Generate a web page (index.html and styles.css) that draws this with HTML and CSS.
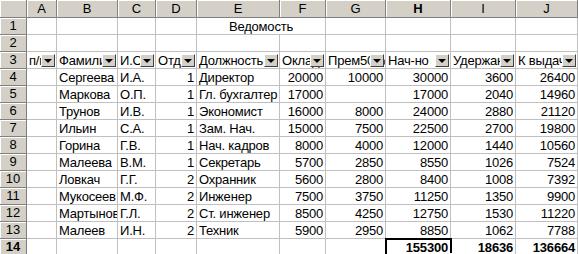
FILE: index.html
```html
<!DOCTYPE html>
<html lang="ru">
<head>
    <meta charset="UTF-8">
    <title>Ведомость</title>
    <link rel="stylesheet" href="styles.css">
</head>
<body>
    <div class="sheet">
        <!-- column headers -->
        <div class="hd corner"></div>
        <div class="hd">A</div>
        <div class="hd">B</div>
        <div class="hd">C</div>
        <div class="hd">D</div>
        <div class="hd">E</div>
        <div class="hd">F</div>
        <div class="hd">G</div>
        <div class="hd cur">H</div>
        <div class="hd">I</div>
        <div class="hd">J</div>

        <!-- 1 -->
        <div class="rh">1</div>
        <div class="c"></div><div class="c"></div><div class="c"></div><div class="c"></div>
        <div class="c title">Ведомость</div>
        <div class="c"></div><div class="c"></div><div class="c"></div><div class="c"></div>

        <!-- 2 -->
        <div class="rh">2</div>
        <div class="c"></div><div class="c"></div><div class="c"></div><div class="c"></div><div class="c"></div>
        <div class="c"></div><div class="c"></div><div class="c"></div><div class="c"></div><div class="c"></div>

        <!-- 3: autofilter headers -->
        <div class="rh">3</div>
        <div class="c flt">п/п<span class="drop"></span></div>
        <div class="c flt">Фамилия<span class="drop"></span></div>
        <div class="c flt">И.О.<span class="drop"></span></div>
        <div class="c flt">Отдел<span class="drop"></span></div>
        <div class="c flt">Должность<span class="drop"></span></div>
        <div class="c flt">Оклад<span class="drop"></span></div>
        <div class="c flt">Прем50%<span class="drop"></span></div>
        <div class="c flt">Нач-но<span class="drop"></span></div>
        <div class="c flt">Удержано<span class="drop"></span></div>
        <div class="c flt">К выдаче<span class="drop"></span></div>

        <!-- 4 -->
        <div class="rh">4</div>
        <div class="c"></div><div class="c">Сергеева</div><div class="c">И.А.</div><div class="c n">1</div>
        <div class="c">Директор</div><div class="c n">20000</div><div class="c n">10000</div>
        <div class="c n">30000</div><div class="c n">3600</div><div class="c n">26400</div>

        <!-- 5 -->
        <div class="rh">5</div>
        <div class="c"></div><div class="c">Маркова</div><div class="c">О.П.</div><div class="c n">1</div>
        <div class="c">Гл. бухгалтер</div><div class="c n">17000</div><div class="c n"></div>
        <div class="c n">17000</div><div class="c n">2040</div><div class="c n">14960</div>

        <!-- 6 -->
        <div class="rh">6</div>
        <div class="c"></div><div class="c">Трунов</div><div class="c">И.В.</div><div class="c n">1</div>
        <div class="c">Экономист</div><div class="c n">16000</div><div class="c n">8000</div>
        <div class="c n">24000</div><div class="c n">2880</div><div class="c n">21120</div>

        <!-- 7 -->
        <div class="rh">7</div>
        <div class="c"></div><div class="c">Ильин</div><div class="c">С.А.</div><div class="c n">1</div>
        <div class="c">Зам. Нач.</div><div class="c n">15000</div><div class="c n">7500</div>
        <div class="c n">22500</div><div class="c n">2700</div><div class="c n">19800</div>

        <!-- 8 -->
        <div class="rh">8</div>
        <div class="c"></div><div class="c">Горина</div><div class="c">Г.В.</div><div class="c n">1</div>
        <div class="c">Нач. кадров</div><div class="c n">8000</div><div class="c n">4000</div>
        <div class="c n">12000</div><div class="c n">1440</div><div class="c n">10560</div>

        <!-- 9 -->
        <div class="rh">9</div>
        <div class="c"></div><div class="c">Малеева</div><div class="c">В.М.</div><div class="c n">1</div>
        <div class="c">Секретарь</div><div class="c n">5700</div><div class="c n">2850</div>
        <div class="c n">8550</div><div class="c n">1026</div><div class="c n">7524</div>

        <!-- 10 -->
        <div class="rh">10</div>
        <div class="c"></div><div class="c">Ловкач</div><div class="c">Г.Г.</div><div class="c n">2</div>
        <div class="c">Охранник</div><div class="c n">5600</div><div class="c n">2800</div>
        <div class="c n">8400</div><div class="c n">1008</div><div class="c n">7392</div>

        <!-- 11 -->
        <div class="rh">11</div>
        <div class="c"></div><div class="c">Мукосеев</div><div class="c">М.Ф.</div><div class="c n">2</div>
        <div class="c">Инженер</div><div class="c n">7500</div><div class="c n">3750</div>
        <div class="c n">11250</div><div class="c n">1350</div><div class="c n">9900</div>

        <!-- 12 -->
        <div class="rh">12</div>
        <div class="c"></div><div class="c">Мартынов</div><div class="c">Г.Л.</div><div class="c n">2</div>
        <div class="c">Ст. инженер</div><div class="c n">8500</div><div class="c n">4250</div>
        <div class="c n">12750</div><div class="c n">1530</div><div class="c n">11220</div>

        <!-- 13 -->
        <div class="rh">13</div>
        <div class="c"></div><div class="c">Малеев</div><div class="c">И.Н.</div><div class="c n">2</div>
        <div class="c">Техник</div><div class="c n">5900</div><div class="c n">2950</div>
        <div class="c n">8850</div><div class="c n">1062</div><div class="c n">7788</div>

        <!-- 14: totals -->
        <div class="rh cur">14</div>
        <div class="c"></div><div class="c"></div><div class="c"></div><div class="c"></div>
        <div class="c"></div><div class="c"></div><div class="c"></div>
        <div class="c n b active">155300</div><div class="c n b">18636</div><div class="c n b">136664</div>
    </div>
</body>
</html>
```

FILE: styles.css
```css
body {
    margin: 0;
    background-color: #fff;
    font-family: "Liberation Sans", Arial, sans-serif;
    font-size: 13px;
    color: #000;
    overflow: hidden;
}
.sheet {
    display: grid;
    grid-template-columns: 27px 30px 61px 38px 41px 83px 46px 60px 65px 65px 62px;
    grid-template-rows: 18px repeat(14, 17px);
    width: 578px;
}
.hd, .rh {
    box-sizing: border-box;
    background-color: #d4d0c8;
    border-right: 1px solid #808080;
    border-bottom: 1px solid #808080;
    box-shadow: inset 1px 1px 0 #fff;
    text-align: center;
    line-height: 17px;
}
.rh {
    line-height: 16px;
}
.cur {
    font-weight: bold;
}
.c {
    position: relative;
    box-sizing: border-box;
    border-right: 1px solid #c0c0c0;
    border-bottom: 1px solid #c0c0c0;
    padding: 0 2px;
    line-height: 17px;
    letter-spacing: -0.2px;
    white-space: nowrap;
    overflow: hidden;
}
.n {
    text-align: right;
}
.b {
    font-weight: bold;
}
.title {
    grid-column: span 2;
    text-align: center;
}
/* autofilter arrow button */
.drop {
    position: absolute;
    right: 1px;
    bottom: 1px;
    width: 14px;
    height: 13px;
    box-sizing: border-box;
    background-color: #d4d0c8;
    border: 1px solid;
    border-color: #fff #404040 #404040 #fff;
}
.drop::after {
    content: "";
    position: absolute;
    left: 2px;
    top: 4px;
    border-left: 4px solid transparent;
    border-right: 4px solid transparent;
    border-top: 4px solid #000;
}
.active {
    overflow: visible;
    outline: 2px solid #000;
    outline-offset: -1px;
    z-index: 1;
}
.active::after {
    content: "";
    position: absolute;
    right: -3px;
    bottom: -3px;
    width: 5px;
    height: 5px;
    background-color: #000;
    border-left: 1px solid #fff;
    border-top: 1px solid #fff;
    box-sizing: border-box;
}
```
